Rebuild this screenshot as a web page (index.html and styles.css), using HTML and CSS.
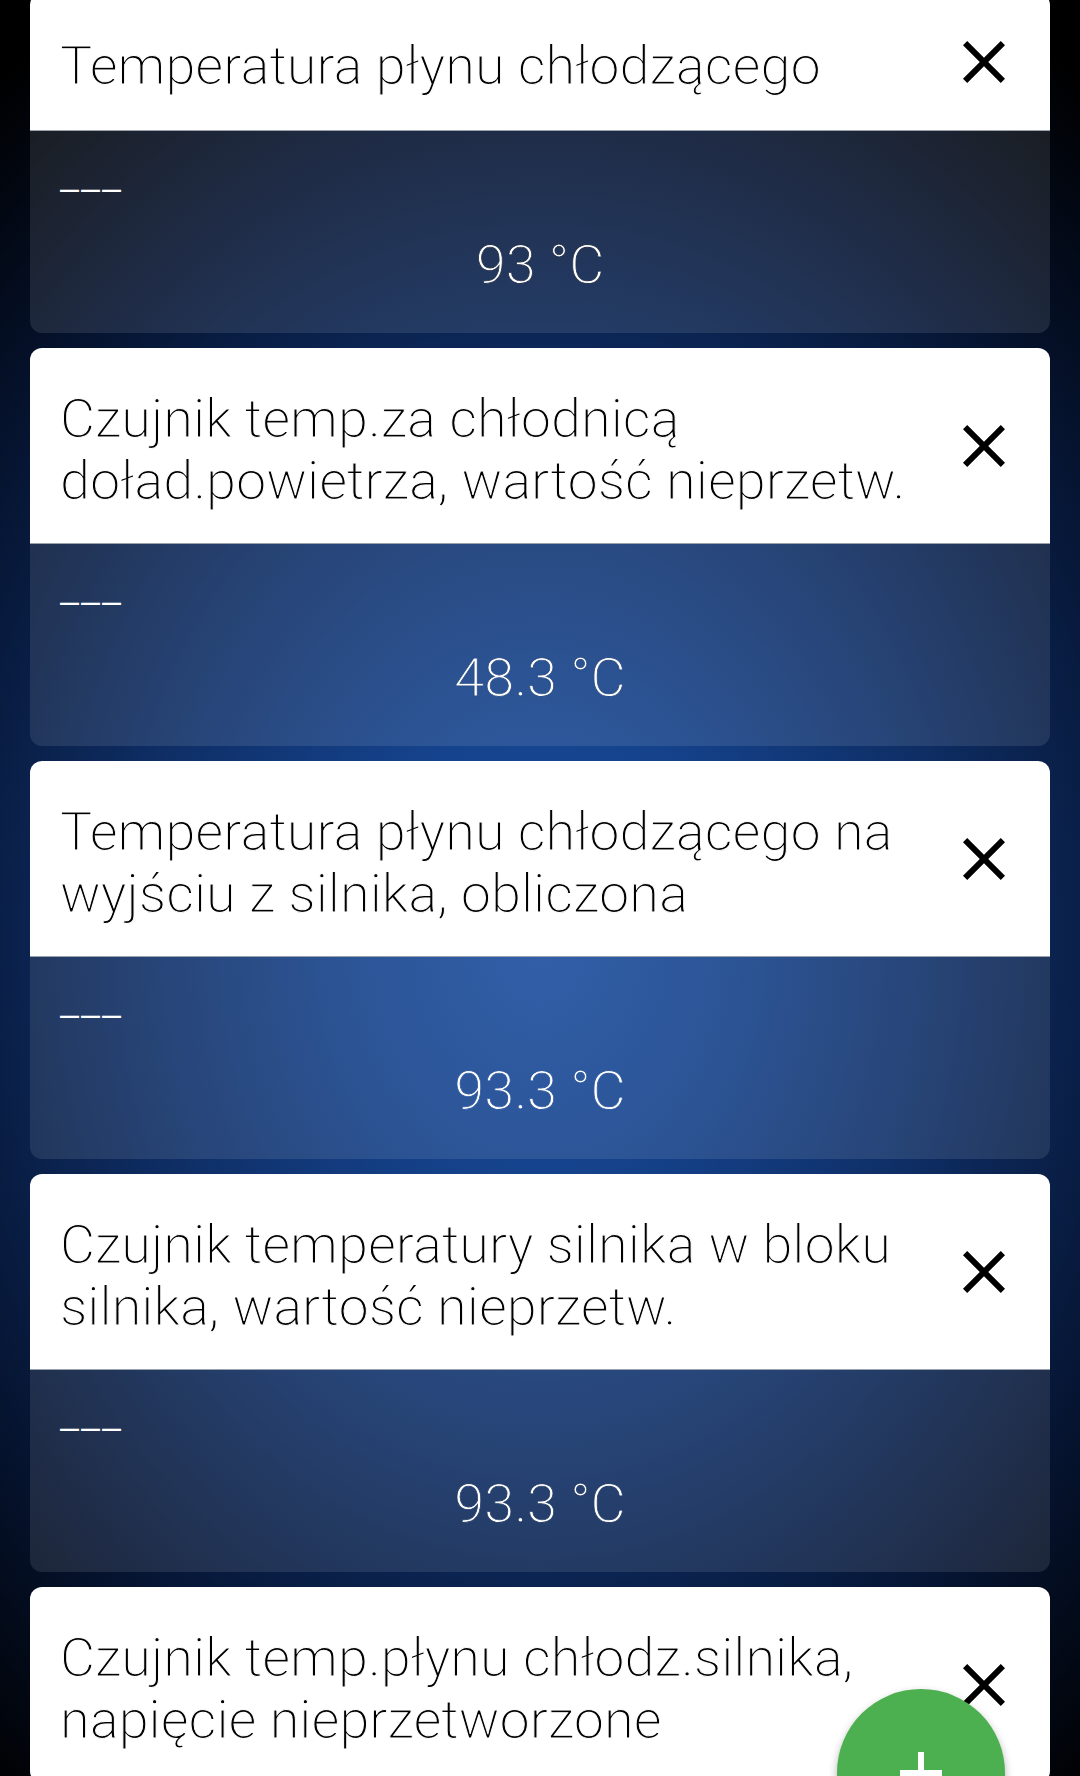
FILE: index.html
```html
<!DOCTYPE html>
<html lang="pl">
<head>
<meta charset="utf-8">
<title>Parametry</title>
<link rel="stylesheet" href="styles.css">
</head>
<body>
<div class="screen">
  <div class="list">
    <section class="card">
      <div class="card-head">
        <div class="card-title">Temperatura płynu chłodzącego</div>
        <button class="close" aria-label="Usuń"><svg viewBox="0 0 24 24" width="72" height="72"><path d="M19 6.41L17.59 5 12 10.59 6.41 5 5 6.41 10.59 12 5 17.59 6.41 19 12 13.41 17.59 19 19 17.59 13.41 12z"/></svg></button>
      </div>
      <div class="card-body tone-dark">
        <div class="card-label">___</div>
        <div class="card-value">93 °C</div>
      </div>
    </section>
    <section class="card">
      <div class="card-head">
        <div class="card-title">Czujnik temp.za chłodnicą doład.powietrza, wartość nieprzetw.</div>
        <button class="close" aria-label="Usuń"><svg viewBox="0 0 24 24" width="72" height="72"><path d="M19 6.41L17.59 5 12 10.59 6.41 5 5 6.41 10.59 12 5 17.59 6.41 19 12 13.41 17.59 19 19 17.59 13.41 12z"/></svg></button>
      </div>
      <div class="card-body tone-mid">
        <div class="card-label">___</div>
        <div class="card-value">48.3 °C</div>
      </div>
    </section>
    <section class="card">
      <div class="card-head">
        <div class="card-title">Temperatura płynu chłodzącego na wyjściu z silnika, obliczona</div>
        <button class="close" aria-label="Usuń"><svg viewBox="0 0 24 24" width="72" height="72"><path d="M19 6.41L17.59 5 12 10.59 6.41 5 5 6.41 10.59 12 5 17.59 6.41 19 12 13.41 17.59 19 19 17.59 13.41 12z"/></svg></button>
      </div>
      <div class="card-body tone-bright">
        <div class="card-label">___</div>
        <div class="card-value">93.3 °C</div>
      </div>
    </section>
    <section class="card">
      <div class="card-head">
        <div class="card-title">Czujnik temperatury silnika w bloku silnika, wartość nieprzetw.</div>
        <button class="close" aria-label="Usuń"><svg viewBox="0 0 24 24" width="72" height="72"><path d="M19 6.41L17.59 5 12 10.59 6.41 5 5 6.41 10.59 12 5 17.59 6.41 19 12 13.41 17.59 19 19 17.59 13.41 12z"/></svg></button>
      </div>
      <div class="card-body tone-low">
        <div class="card-label">___</div>
        <div class="card-value">93.3 °C</div>
      </div>
    </section>
    <section class="card">
      <div class="card-head">
        <div class="card-title">Czujnik temp.płynu chłodz.silnika, napięcie nieprzetworzone</div>
        <button class="close" aria-label="Usuń"><svg viewBox="0 0 24 24" width="72" height="72"><path d="M19 6.41L17.59 5 12 10.59 6.41 5 5 6.41 10.59 12 5 17.59 6.41 19 12 13.41 17.59 19 19 17.59 13.41 12z"/></svg></button>
      </div>
    </section>
  </div>
  <button class="fab" aria-label="Dodaj"><svg viewBox="0 0 24 24" width="72" height="72"><path d="M19 13h-6v6h-2v-6H5v-2h6V5h2v6h6v2z"/></svg></button>
</div>
</body>
</html>
```

FILE: styles.css
```css
html, body {
  margin: 0;
  padding: 0;
}

body {
  width: 1080px;
  height: 1776px;
  overflow: hidden;
  font-family: "Roboto Light", Roboto, "Noto Sans", "Liberation Sans", sans-serif;
  background: radial-gradient(ellipse 80% 62% at 50% 53%, #1a4d9f 0%, #15428b 22%, #0e2d63 48%, #061533 74%, #000 100%);
}

.screen {
  position: relative;
  width: 1080px;
  height: 1776px;
  overflow: hidden;
}

.list {
  display: flex;
  flex-direction: column;
  gap: 15px;
  padding: 0 30px;
  margin-top: -7px;
}

.card {
  border-radius: 12px;
  overflow: hidden;
  flex: none;
}

.card-head {
  display: flex;
  align-items: center;
  background: #fff;
  padding: 40px 30px 32px 30px;
  border-bottom: 1px solid #9aa3ad;
}

.card-title {
  flex: 1;
  min-width: 0;
  font-size: 54px;
  font-weight: 300;
  line-height: 61.5px;
  color: #000;
  -webkit-text-stroke: 1px #fff;
}

.close {
  flex: none;
  width: 72px;
  height: 72px;
  margin: -7px 0 0 18px;
  padding: 0;
  border: 0;
  background: none;
  display: flex;
}

.close svg {
  fill: #000;
}

.card-body {
  height: 202px;
  box-sizing: border-box;
  padding: 0 30px 37px 30px;
  background: rgba(255, 255, 255, 0.1);
  color: #fff;
  display: flex;
  flex-direction: column;
  --tone: #26406c;
}

.tone-dark { --tone: #222f4a; }
.tone-mid { --tone: #2a4c86; }
.tone-bright { --tone: #2d58a0; }
.tone-low { --tone: #253d69; }

.card-label {
  height: 103px;
  box-sizing: border-box;
  padding-top: 21px;
  font-size: 44px;
  font-weight: 300;
  line-height: 46px;
  letter-spacing: 2px;
}

.card-value {
  text-align: center;
  font-size: 54px;
  font-weight: 300;
  line-height: 61.5px;
  -webkit-text-stroke: 0.8px var(--tone);
}

.fab {
  position: absolute;
  left: 837px;
  top: 1689px;
  width: 168px;
  height: 168px;
  border-radius: 50%;
  border: 0;
  padding: 0;
  background: #4caf50;
  box-shadow: 0 4px 8px rgba(0, 0, 0, 0.3);
  display: flex;
  align-items: center;
  justify-content: center;
}

.fab svg {
  fill: #fff;
}
```
